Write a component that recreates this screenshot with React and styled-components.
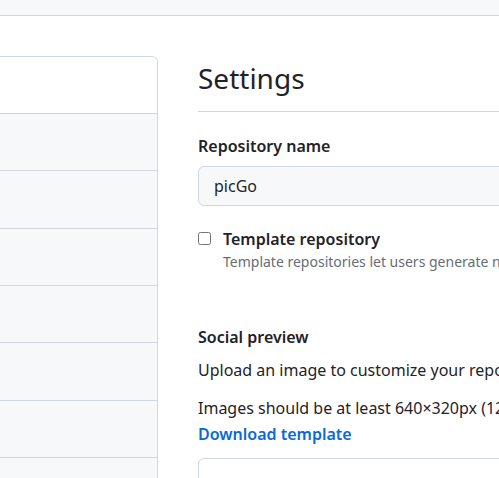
import React from 'react';
import styled, { createGlobalStyle } from 'styled-components';

const GlobalStyle = createGlobalStyle`
  html, body { margin: 0; padding: 0; background: #ffffff; overflow: hidden; }
  body {
    font-family: "Noto Sans", "Open Sans", sans-serif;
    color: #1f2328;
    font-size: 16px;
  }
`;

const TopBar = styled.div`
  height: 15px;
  background: #f6f8fa;
  border-bottom: 1px solid #d0d7de;
`;

const Layout = styled.div`
  display: grid;
  grid-template-columns: 158px 1fr;
  column-gap: 40px;
  padding-top: 40px;
  width: 900px;
`;

const SideNav = styled.nav`
  border: 1px solid #d0d7de;
  border-left: none;
  border-top-right-radius: 6px;
  background: #f6f8fa;
  height: 520px;
  overflow: hidden;
`;

const NavHead = styled.div`
  height: 56px;
  background: #ffffff;
  border-bottom: 1px solid #d0d7de;
`;

const NavItem = styled.div`
  height: 56.33px;
  border-bottom: 1px solid #d0d7de;
`;

const Main = styled.main`
  display: flex;
  flex-direction: column;
`;

const Header = styled.div`
  padding: 4px 0 15px;
  border-bottom: 1px solid #d0d7de;
`;

const Title = styled.h2`
  margin: 0;
  font-size: 28px;
  font-weight: 400;
  line-height: 36px;
`;

const Label = styled.label`
  display: block;
  margin-top: ${p => p.$top || 0}px;
  font-size: 16px;
  font-weight: 600;
  line-height: 24px;
`;

const TextInput = styled.div`
  margin-top: 8px;
  height: 38px;
  display: flex;
  align-items: center;
  padding-left: 15px;
  background: #f6f8fa;
  border: 1px solid #d0d7de;
  border-radius: 6px;
  font-size: 16px;
`;

const CheckRow = styled.div`
  display: grid;
  grid-template-columns: 25px 1fr;
  margin-top: 21px;
`;

const Box = styled.input`
  margin: 5px 0 0 0;
  width: 13px;
  height: 13px;
`;

const Note = styled.div`
  grid-column: 2;
  font-size: 14px;
  line-height: 21px;
  color: #656d76;
  white-space: nowrap;
`;

const Para = styled.p`
  margin: ${p => p.$top || 0}px 0 0;
  font-size: 16px;
  line-height: 24px;
  white-space: nowrap;
`;

const Link = styled.a`
  display: block;
  margin-top: 2px;
  color: #0969da;
  font-weight: 600;
  line-height: 24px;
  text-decoration: none;
`;

const Preview = styled.div`
  margin-top: 12px;
  height: 200px;
  border: 1px solid #d0d7de;
  border-radius: 6px;
`;

export default function App() {
  return (
    <>
      <GlobalStyle />
      <TopBar />
      <Layout>
        <SideNav>
          <NavHead />
          {[0, 1, 2, 3, 4, 5, 6].map(i => <NavItem key={i} />)}
        </SideNav>
        <Main>
          <Header>
            <Title>Settings</Title>
          </Header>
          <Label $top={22}>Repository name</Label>
          <TextInput>picGo</TextInput>
          <CheckRow>
            <Box type="checkbox" />
            <Label>Template repository</Label>
            <Note>Template repositories let users generate new repositories with the same directory structure and files.</Note>
          </CheckRow>
          <Label $top={53}>Social preview</Label>
          <Para $top={9}>Upload an image to customize your repository's social media preview.</Para>
          <Para $top={14}>Images should be at least 640×320px (1280×640px for best display).</Para>
          <Link href="#">Download template</Link>
          <Preview />
        </Main>
      </Layout>
    </>
  );
}
